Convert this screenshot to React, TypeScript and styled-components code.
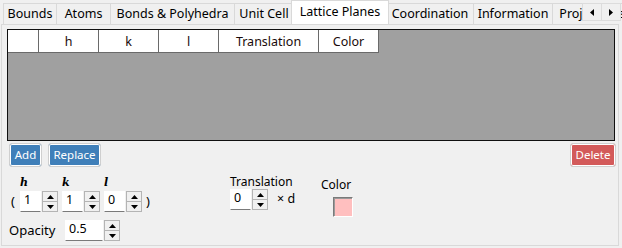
import React from "react";
import styled, { createGlobalStyle } from "styled-components";

const GlobalStyle = createGlobalStyle`
  html, body { margin: 0; padding: 0; background: #f0f0f0; }
  body {
    font-family: "Noto Sans", "Open Sans", "DejaVu Sans", sans-serif;
    font-size: 12px;
    color: #000;
  }
  * { box-sizing: border-box; }
`;

const Window = styled.div`
  position: relative;
  width: 622px;
  height: 248px;
  background: #f0f0f0;
  overflow: hidden;
`;

const TabStrip = styled.div`
  position: relative;
  height: 24px;
  display: flex;
  align-items: flex-end;
  padding-left: 3px;
  overflow: hidden;
`;

const Tab = styled.div<{ $w: number; $active?: boolean }>`
  flex: none;
  position: relative;
  width: ${(p) => p.$w + (p.$active ? 5 : 0)}px;
  height: ${(p) => (p.$active ? 25 : 21)}px;
  margin-left: ${(p) => (p.$active ? -3 : -1)}px;
  margin-right: ${(p) => (p.$active ? -2 : 0)}px;
  margin-bottom: ${(p) => (p.$active ? -1 : 0)}px;
  z-index: ${(p) => (p.$active ? 2 : 1)};
  border: 1px solid #d9d9d9;
  border-bottom: none;
  background: ${(p) => (p.$active ? "#ffffff" : "#f0f0f0")};
  display: flex;
  align-items: center;
  justify-content: center;
  padding-bottom: ${(p) => (p.$active ? 2 : 0)}px;
  white-space: nowrap;
  line-height: 1;
  font-size: 12.5px;

  &:first-child {
    margin-left: 0;
  }
`;

const ScrollArrows = styled.div`
  position: absolute;
  top: 3px;
  right: 1px;
  display: flex;
  z-index: 3;
`;

const ArrowButton = styled.div`
  width: 20px;
  height: 18px;
  background: #f0f0f0;
  border: 1px solid #dcdcdc;
  display: flex;
  align-items: center;
  justify-content: center;
  & + & {
    margin-left: -1px;
  }
`;

const Panel = styled.div`
  position: relative;
  z-index: 1;
  margin-left: 1px;
  width: 618px;
  height: 222px;
  border: 1px solid #d9d9d9;
  background: #f0f0f0;
  padding: 4px 0 0 5px;
  display: flex;
  flex-direction: column;
`;

const Grid = styled.div`
  width: 608px;
  height: 112px;
  border: 1px solid #101010;
  background: #a0a0a0;
`;

const HeaderRow = styled.div`
  display: flex;
`;

const HeaderCell = styled.div<{ $w: number }>`
  width: ${(p) => p.$w}px;
  height: 23px;
  background: #ffffff;
  border-right: 1px solid #6a6a6a;
  border-bottom: 1px solid #6a6a6a;
  display: flex;
  align-items: center;
  justify-content: center;
  font-size: 12.5px;
  color: #1a0a0a;
`;

const ButtonRow = styled.div`
  display: flex;
  align-items: center;
  margin: 2px 2px 0 2px;
  gap: 6px;
`;

const Spacer = styled.div`
  flex: 1;
`;

const ActionButton = styled.button<{ $tone: "blue" | "red"; $w: number }>`
  width: ${(p) => p.$w}px;
  height: 24px;
  padding: 0 0 1px 0;
  border: 1px solid #cfcfcf;
  border-radius: 3px;
  box-shadow: inset 0 0 0 1px #ffffff;
  background: ${(p) => (p.$tone === "blue" ? "#3f7fb9" : "#d35a5a")};
  color: #ffffff;
  font-family: inherit;
  font-size: 11.5px;
  line-height: 1;
`;

const Lower = styled.div`
  display: flex;
  padding-left: 2px;
  margin-top: 9px;
`;

const LeftColumn = styled.div`
  width: 221px;
  display: flex;
  flex-direction: column;
`;

const AxisLabels = styled.div`
  display: flex;
  height: 14px;
  padding-left: 11px;
`;

const AxisLabel = styled.span`
  width: 42px;
  font-family: "DejaVu Serif", "Liberation Serif", serif;
  font-style: italic;
  font-weight: bold;
  font-size: 11px;
  line-height: 14px;
`;

const SpinRow = styled.div`
  display: flex;
  align-items: center;
  margin-top: 1px;
  height: 21px;
`;

const Paren = styled.span`
  width: 11px;
  font-size: 13px;
  line-height: 21px;
  padding-left: 2px;
`;

const CloseParen = styled(Paren)`
  padding-left: 0;
`;

const SpinGroup = styled.div`
  display: flex;
  gap: 1px;
  margin-right: 4px;
`;

const Field = styled.input<{ $w: number }>`
  width: ${(p) => p.$w}px;
  height: 21px;
  border: 1px solid #ffffff;
  border-bottom: 1px solid #7a7a7a;
  background: #ffffff;
  padding: 0 0 5px 3px;
  margin: 0;
  font-family: inherit;
  font-size: 12.5px;
  color: #000;
  outline: none;
`;

const Spinner = styled.div`
  width: 16px;
  height: 21px;
  display: flex;
  flex-direction: column;
  border: 1px solid #b4b4b4;
  background: #f0f0f0;
`;

const SpinHalf = styled.div`
  flex: 1;
  display: flex;
  align-items: center;
  justify-content: center;
  & + & {
    border-top: 1px solid #b4b4b4;
  }
`;

const OpacityRow = styled.div`
  display: flex;
  align-items: center;
  margin-top: 8px;
  height: 21px;
`;

const OpacityLabel = styled.span`
  width: 56px;
  font-size: 13px;
  padding-bottom: 1px;
`;

const Column = styled.div<{ $w: number; $top: number }>`
  width: ${(p) => p.$w}px;
  display: flex;
  flex-direction: column;
  margin-top: ${(p) => p.$top}px;
`;

const SmallLabel = styled.span`
  font-size: 12px;
  line-height: 14px;
  height: 14px;
`;

const TransRow = styled.div`
  display: flex;
  align-items: center;
`;

const TimesD = styled.span`
  margin-left: 5px;
  font-size: 12.5px;
  padding-bottom: 2px;
`;

const Swatch = styled.div<{ $color: string }>`
  width: 20px;
  height: 20px;
  margin: 5px 0 0 12px;
  background: ${(p) => p.$color};
  border: 1px solid;
  border-color: #7a7a7a #ffffff #ffffff #7a7a7a;
  box-shadow: inset 1px 1px 0 #9a9a9a;
`;

const Tri = ({ up }: { up?: boolean }) => (
  <svg width="7" height="4" viewBox="0 0 7 4">
    {up ? <polygon points="3.5,0 7,4 0,4" fill="#000" /> : <polygon points="0,0 7,0 3.5,4" fill="#000" />}
  </svg>
);

const SideTri = ({ left }: { left?: boolean }) => (
  <svg width="4" height="7" viewBox="0 0 4 7">
    {left ? <polygon points="4,0 4,7 0,3.5" fill="#000" /> : <polygon points="0,0 4,3.5 0,7" fill="#000" />}
  </svg>
);

const Spin = ({ value, w }: { value: string; w: number }) => (
  <SpinGroup>
    <Field $w={w} defaultValue={value} readOnly />
    <Spinner>
      <SpinHalf>
        <Tri up />
      </SpinHalf>
      <SpinHalf>
        <Tri />
      </SpinHalf>
    </Spinner>
  </SpinGroup>
);

const tabs = [
  { label: "Bounds", w: 54 },
  { label: "Atoms", w: 55 },
  { label: "Bonds & Polyhedra", w: 125 },
  { label: "Unit Cell", w: 60 },
  { label: "Lattice Planes", w: 93, active: true },
  { label: "Coordination", w: 88 },
  { label: "Information", w: 80 },
  { label: "Projections", w: 80 },
];

const columns = [
  { label: "", w: 31 },
  { label: "h", w: 60 },
  { label: "k", w: 60 },
  { label: "l", w: 60 },
  { label: "Translation", w: 100 },
  { label: "Color", w: 60 },
];

export default function App() {
  return (
    <>
      <GlobalStyle />
      <Window>
        <TabStrip>
          {tabs.map((t) => (
            <Tab key={t.label} $w={t.w} $active={t.active}>
              {t.label}
            </Tab>
          ))}
        </TabStrip>
        <ScrollArrows>
          <ArrowButton>
            <SideTri left />
          </ArrowButton>
          <ArrowButton>
            <SideTri />
          </ArrowButton>
        </ScrollArrows>
        <Panel>
          <Grid>
            <HeaderRow>
              {columns.map((c, i) => (
                <HeaderCell key={i} $w={c.w}>
                  {c.label}
                </HeaderCell>
              ))}
            </HeaderRow>
          </Grid>
          <ButtonRow>
            <ActionButton $tone="blue" $w={33}>Add</ActionButton>
            <ActionButton $tone="blue" $w={53}>Replace</ActionButton>
            <Spacer />
            <ActionButton $tone="red" $w={46}>Delete</ActionButton>
          </ButtonRow>
          <Lower>
            <LeftColumn>
              <AxisLabels>
                <AxisLabel>h</AxisLabel>
                <AxisLabel>k</AxisLabel>
                <AxisLabel>l</AxisLabel>
              </AxisLabels>
              <SpinRow>
                <Paren>(</Paren>
                <Spin value="1" w={21} />
                <Spin value="1" w={21} />
                <Spin value="0" w={21} />
                <CloseParen>)</CloseParen>
              </SpinRow>
              <OpacityRow>
                <OpacityLabel>Opacity</OpacityLabel>
                <Spin value="0.5" w={38} />
              </OpacityRow>
            </LeftColumn>
            <Column $w={91} $top={-1}>
              <SmallLabel>Translation</SmallLabel>
              <TransRow>
                <Spin value="0" w={21} />
                <TimesD>× d</TimesD>
              </TransRow>
            </Column>
            <Column $w={60} $top={2}>
              <SmallLabel>Color</SmallLabel>
              <Swatch $color="#ffbfbf" />
            </Column>
          </Lower>
        </Panel>
      </Window>
    </>
  );
}
